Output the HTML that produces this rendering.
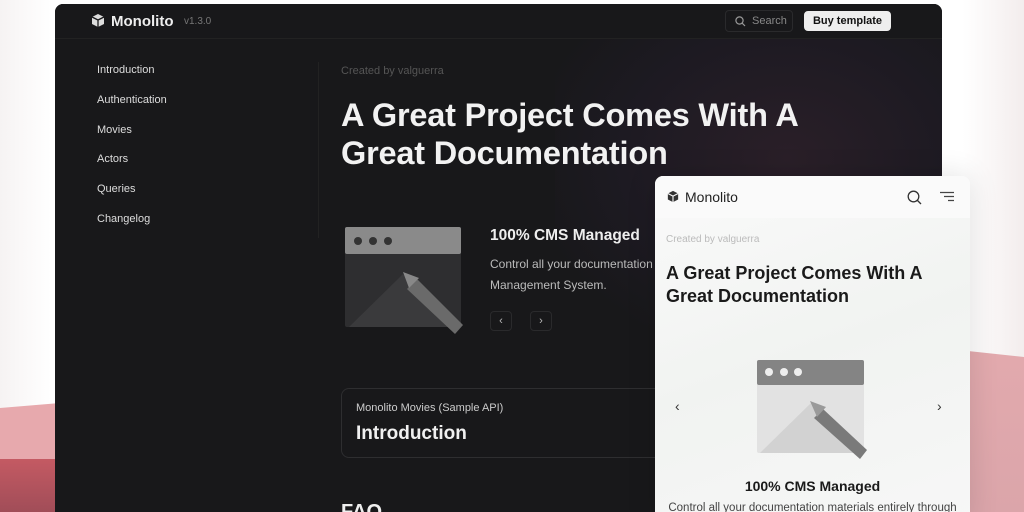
<!DOCTYPE html>
<html><head><meta charset="utf-8"><style>
*{margin:0;padding:0;box-sizing:border-box}
html,body{width:1024px;height:512px;overflow:hidden}
body{position:relative;font-family:"Liberation Sans",sans-serif;background:#fff}
.bg{position:absolute;inset:0;background:linear-gradient(90deg,#f6f3f3 0%,#fff 5%,#fff 94%,#f3eded 100%)}
.pinkL{position:absolute;left:0;top:0;width:60px;height:512px;background:#e7a9ad;clip-path:polygon(0 408px,60px 403px,60px 512px,0 512px)}
.redL{position:absolute;left:0;top:459px;width:60px;height:53px;background:linear-gradient(180deg,#c45a63,#a14d58)}
.pinkR{position:absolute;left:940px;top:0;width:84px;height:512px;background:linear-gradient(180deg,#f2b3b5 0,#dba5aa 100%);clip-path:polygon(0 348px,84px 357px,84px 512px,0 512px)}
.win{position:absolute;left:55px;top:4px;width:887px;height:508px;background:#18181a;border-radius:8px 8px 0 0;overflow:hidden}
.glow{position:absolute;left:500px;top:34px;width:387px;height:300px;background:radial-gradient(ellipse at 60% 40%,#2a1f28 0%,#1d1a22 50%,rgba(24,24,26,0) 80%)}
.hdr{position:absolute;left:0;top:0;width:887px;height:35px;border-bottom:1px solid #222;background:#18181a}
.logo{position:absolute;left:36px;top:9px;color:#eee;font-weight:bold;font-size:15px}
.ver{position:absolute;left:129px;top:12px;color:#777;font-size:10px}
.search{position:absolute;left:670px;top:6px;width:68px;height:22px;border:1px solid #2a2a2c;border-radius:4px;color:#888;font-size:11px;padding:4px 0 0 26px}
.buy{position:absolute;left:749px;top:7px;width:87px;height:20px;background:#eee;border-radius:4px;color:#111;font-size:11px;text-align:center;line-height:20px;font-weight:bold}
.nav{position:absolute;left:42px;top:52px;color:#ddd;font-size:11px;line-height:29.8px}
.vline{position:absolute;left:263px;top:58px;width:1px;height:176px;background:#222}
.created{position:absolute;left:286px;top:61px;color:#555;font-size:11px}
h1{position:absolute;left:286px;top:92px;color:#f2f2f2;font-size:32.5px;line-height:38px;font-weight:bold;letter-spacing:-.2px}
.cmsT{position:absolute;left:435px;top:223px;color:#eee;font-weight:bold;font-size:15.5px}
.cmsD{position:absolute;left:435px;top:250px;color:#bbb;font-size:12px;line-height:21px;white-space:nowrap}
.btn{position:absolute;top:307px;width:22px;height:20px;border:1px solid #2a2a2c;border-radius:4px;color:#bbb;font-size:11px;text-align:center;line-height:18px}
.card{position:absolute;left:286px;top:384px;width:400px;height:70px;border:1px solid #2e2e30;border-radius:8px}
.card .s{position:absolute;left:14px;top:13px;color:#ccc;font-size:11px}
.card .t{position:absolute;left:14px;top:34px;color:#f0f0f0;font-size:19px;font-weight:bold}
.faq{position:absolute;left:286px;top:497px;color:#eee;font-size:20px;font-weight:bold}
.mob{position:absolute;left:655px;top:176px;width:315px;height:350px;background:linear-gradient(160deg,#fafafa,#f1f3f1 50%,#f7f7f7);border-radius:8px;overflow:hidden;box-shadow:0 0 30px rgba(0,0,0,.12)}
.mhdr{position:absolute;left:0;top:0;width:315px;height:42px;background:#fafafa}
.mlogo{position:absolute;left:12px;top:13px;color:#222;font-size:14px}
.mcr{position:absolute;left:11px;top:58px;color:#bbb;font-size:10px}
.mh{position:absolute;left:11px;top:86px;color:#1a1a1a;font-size:18px;line-height:23px;font-weight:bold}
.mcms{position:absolute;left:0;width:315px;top:302px;text-align:center;color:#1a1a1a;font-weight:bold;font-size:14px}
.mdesc{position:absolute;left:0;width:315px;top:326px;text-align:center;color:#444;font-size:11.5px;white-space:nowrap}
</style></head><body>
<div class="bg"></div><div class="pinkL"></div><div class="redL"></div><div class="pinkR"></div>
<div class="win">
<div class="glow"></div>
<div class="hdr">
<svg style="position:absolute;left:36px;top:9px" width="14" height="15" viewBox="0 0 14 15"><path d="M7 1L13 4V11L7 14L1 11V4Z" fill="#ddd"/><path d="M1 4L7 7L13 4M7 7V14" stroke="#18181a" stroke-width="1.3" fill="none"/></svg>
<div class="logo" style="left:56px">Monolito</div><div class="ver">v1.3.0</div>
<div class="search"><svg style="position:absolute;left:9px;top:5px" width="11" height="11" viewBox="0 0 11 11"><circle cx="4.5" cy="4.5" r="3.6" stroke="#999" stroke-width="1.2" fill="none"/><path d="M7.2 7.2L10 10" stroke="#999" stroke-width="1.2"/></svg>Search</div>
<div class="buy">Buy template</div>
</div>
<div class="nav">Introduction<br>Authentication<br>Movies<br>Actors<br>Queries<br>Changelog</div>
<div class="vline"></div>
<div class="created">Created by valguerra</div>
<h1>A Great Project Comes With A<br>Great Documentation</h1>
<svg style="position:absolute;left:290px;top:223px" width="120" height="112" viewBox="0 0 120 112"><rect x="0" y="0" width="116" height="100" rx="2" fill="#2e2e30"/><rect x="0" y="0" width="116" height="27" rx="2" fill="#8a8a8a"/><circle cx="13" cy="14" r="4" fill="#333"/><circle cx="28" cy="14" r="4" fill="#333"/><circle cx="43" cy="14" r="4" fill="#333"/><path d="M4 100L58 47L112 100Z" fill="#3a3a3c"/><path d="M72 52L118 98L110 107L62 62Z" fill="#6a6a6a"/><path d="M58 45L74 51L64 61Z" fill="#888"/></svg>
<div class="cmsT">100% CMS Managed</div>
<div class="cmsD">Control all your documentation materials entirely through a Content<br>Management System.</div>
<div class="btn" style="left:435px">‹</div><div class="btn" style="left:475px">›</div>
<div class="card"><div class="s">Monolito Movies (Sample API)</div><div class="t">Introduction</div></div>
<div class="faq">FAQ</div>
</div>
<div class="mob">
<div class="mhdr">
<svg style="position:absolute;left:12px;top:14px" width="12" height="13" viewBox="0 0 14 15"><path d="M7 1L13 4V11L7 14L1 11V4Z" fill="#333"/><path d="M1 4L7 7L13 4M7 7V14" stroke="#fafafa" stroke-width="1.3" fill="none"/></svg>
<div class="mlogo" style="left:30px">Monolito</div>
<svg style="position:absolute;left:252px;top:14px" width="15" height="15" viewBox="0 0 15 15"><circle cx="6.5" cy="6.5" r="5.3" stroke="#333" stroke-width="1.3" fill="none"/><path d="M10.5 10.5L14 14" stroke="#333" stroke-width="1.3"/></svg>
<svg style="position:absolute;left:285px;top:15px" width="14" height="12" viewBox="0 0 14 12"><path d="M0 1.5H14M4 5.5H14M8 9.5H14" stroke="#444" stroke-width="1.2"/></svg>
</div>
<div class="mcr">Created by valguerra</div>
<div class="mh">A Great Project Comes With A<br>Great Documentation</div>
<div style="position:absolute;left:20px;top:222px;color:#333;font-size:14px">‹</div>
<div style="position:absolute;left:282px;top:222px;color:#333;font-size:14px">›</div>
<svg style="position:absolute;left:102px;top:184px" width="112" height="108" viewBox="0 0 112 108"><rect x="0" y="0" width="107" height="93" rx="2" fill="#e2e2e2"/><rect x="0" y="0" width="107" height="25" rx="2" fill="#848484"/><circle cx="12" cy="12" r="4" fill="#eee"/><circle cx="27" cy="12" r="4" fill="#eee"/><circle cx="41" cy="12" r="4" fill="#eee"/><path d="M3 93L54 43L105 93Z" fill="#d2d2d2"/><path d="M66 49L110 90L103 99L57 58Z" fill="#7a7a7a"/><path d="M53 41L69 47L60 57Z" fill="#9a9a9a"/></svg>
<div class="mcms">100% CMS Managed</div>
<div class="mdesc">Control all your documentation materials entirely through</div>
</div>
</body></html>
